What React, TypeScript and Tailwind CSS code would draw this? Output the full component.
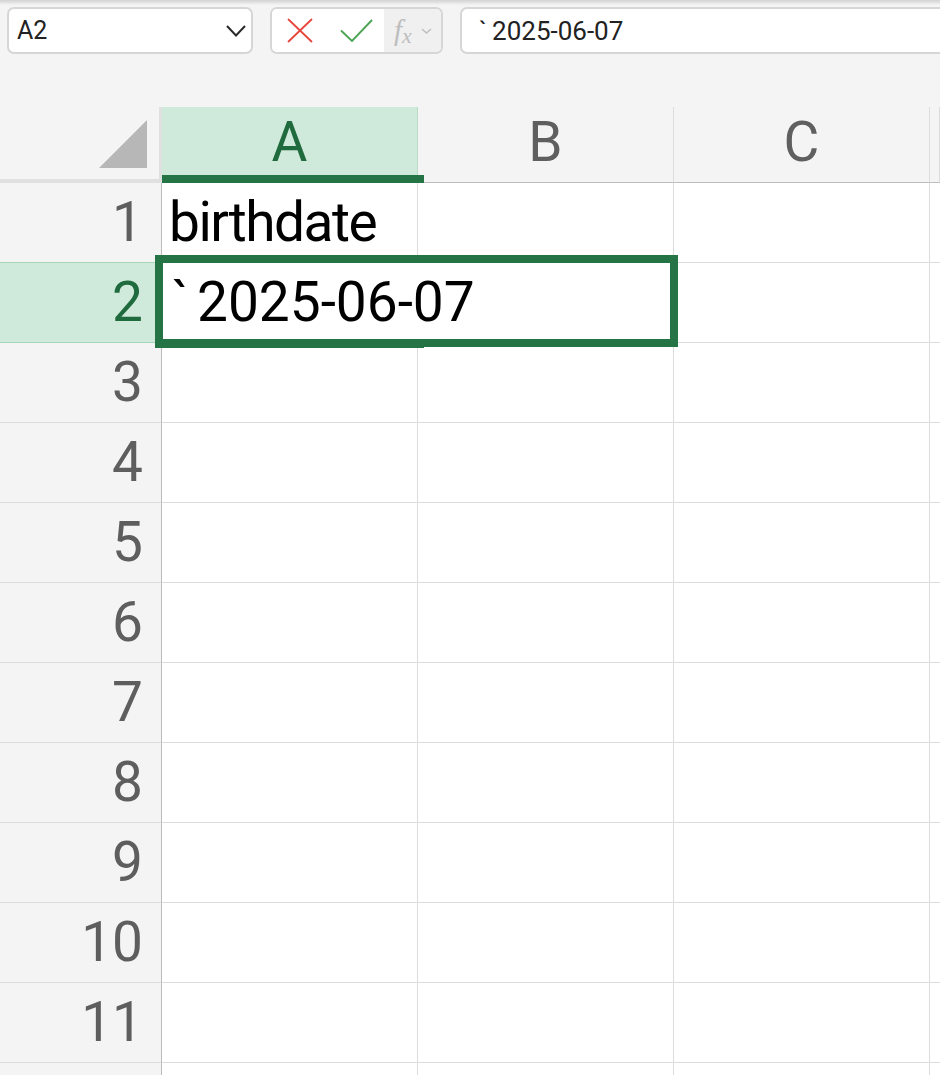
import React from "react";

const rowNumbers = [1, 2, 3, 4, 5, 6, 7, 8, 9, 10, 11, 12];

const cellData: Record<number, string> = {
  1: "birthdate",
};

export default function App() {
  return (
    <div className="relative w-[940px] h-[1075px] overflow-hidden bg-[#f4f4f4] font-['Roboto',sans-serif]">
      {/* top shadow */}
      <div className="h-[5px] bg-gradient-to-b from-[#d2d2d2] to-[#f4f4f4]" />

      {/* Formula toolbar */}
      <div className="flex items-center h-[47px] mt-[2px] pl-[7px]">
        <div className="flex items-center justify-between w-[246px] h-full bg-white border-2 border-[#d6d6d6] rounded-[7px] pl-[8px] pr-[5px]">
          <span className="text-[25px] leading-none text-[#222]">A2</span>
          <svg width="20" height="12" viewBox="0 0 20 12">
            <polyline points="1,1 10,10.5 19,1" fill="none" stroke="#2b2b2b" strokeWidth="2" />
          </svg>
        </div>

        <div className="ml-[17px] flex h-full w-[173px] border-2 border-[#d6d6d6] rounded-[7px] overflow-hidden bg-white">
          <div className="flex items-center w-[112px] bg-white">
            <svg className="ml-[15px]" width="26" height="25" viewBox="0 0 26 25">
              <line x1="1" y1="1" x2="25" y2="24" stroke="#e6463b" strokeWidth="1.8" />
              <line x1="25" y1="1" x2="1" y2="24" stroke="#e6463b" strokeWidth="1.8" />
            </svg>
            <svg className="ml-[27px]" width="33" height="23" viewBox="0 0 33 23">
              <polyline points="1,11.5 12,22 32,1" fill="none" stroke="#4ea556" strokeWidth="1.9" />
            </svg>
          </div>
          <div className="flex flex-1 items-center bg-[#f0f0f0] pl-[10px]">
            <span className="font-['Liberation_Serif',serif] italic text-[29px] leading-none text-[#bdbdbd]">
              f<span className="text-[22px] relative top-[3px]">x</span>
            </span>
            <svg className="ml-[9px]" width="11" height="6" viewBox="0 0 11 6">
              <polyline points="1,1 5.5,5 10,1" fill="none" stroke="#bdbdbd" strokeWidth="1.4" />
            </svg>
          </div>
        </div>

        <div className="ml-[17px] -mr-[12px] flex flex-1 items-center h-full bg-white border-2 border-[#d6d6d6] rounded-[7px] pl-[17px]">
          <span className="text-[26px] leading-none text-[#222]">`</span>
          <span className="ml-[5px] text-[26px] leading-none text-[#222]">2025-06-07</span>
        </div>
      </div>

      {/* Column headers */}
      <div className="mt-[53px] grid grid-cols-[162px_256px_256px_256px_1fr] h-[76px]">
        <div className="flex items-end justify-end border-r-[3px] border-b-[4px] border-[#e0e0e0] pr-[12px] pb-[11px]">
          <svg width="48" height="48" viewBox="0 0 48 48">
            <polygon points="0,48 48,0 48,48" fill="#b7b7b7" />
          </svg>
        </div>
        <div className="relative flex items-center justify-center pb-[6px] bg-[#cfe9db] border-r border-[#b9dcc6]">
          <span className="text-[55px] leading-none text-[#1f6b3d]">A</span>
          <div className="absolute left-0 -right-[7px] bottom-0 h-[8px] bg-[#247445]" />
        </div>
        {["B", "C", ""].map((col) => (
          <div
            key={col}
            className="flex items-center justify-center pb-[5px] border-r border-r-[#dcdcdc] border-b border-b-[#bdbdbd]"
          >
            <span className="text-[55px] leading-none text-[#5f5f5f]">{col}</span>
          </div>
        ))}
      </div>

      {/* Rows */}
      {rowNumbers.map((n) => (
        <div key={n} className="grid grid-cols-[162px_256px_256px_256px_1fr] h-[80px]">
          <div
            className={
              n === 2
                ? "flex items-center justify-end pr-[18px] bg-[#cfe9db] border-r border-r-[#bababa] border-b border-b-[#a6d6b9]"
                : n === 1
                ? "flex items-center justify-end pr-[18px] bg-[#f4f4f4] border-r border-r-[#bababa] border-b border-b-[#a6d6b9]"
                : "flex items-center justify-end pr-[18px] bg-[#f4f4f4] border-r border-r-[#bababa] border-b border-b-[#dcdcdc]"
            }
          >
            {n < 12 && (
              <span className={n === 2 ? "text-[55px] leading-none text-[#1f6b3d]" : "text-[55px] leading-none text-[#5e5e5e]"}>
                {n}
              </span>
            )}
          </div>
          <div
            className={
              n === 2
                ? "flex items-center pl-[7px] bg-white border-r border-r-white border-b border-b-[#dcdcdc] whitespace-nowrap overflow-visible"
                : "flex items-center pl-[7px] bg-white border-r border-b border-[#dcdcdc] whitespace-nowrap overflow-visible"
            }
          >
            {n === 1 && <span className="text-[55px] leading-none text-black tracking-[-1.5px]">{cellData[1]}</span>}
            {n === 2 && (
              <div className="relative z-[1] flex items-center">
                <span className="ml-[3px] text-[55px] leading-none text-black">`</span>
                <span className="ml-[8px] text-[55px] leading-none text-black">2025-06-07</span>
              </div>
            )}
          </div>
          <div className="bg-white border-r border-b border-[#dcdcdc]" />
          <div className="bg-white border-r border-b border-[#dcdcdc]" />
          <div className="bg-white border-b border-[#dcdcdc]" />
        </div>
      ))}

      {/* Active cell selection */}
      <div className="absolute left-[155px] top-[255px] w-[523px] h-[92px] border-[8px] border-[#247445]" />
      <div className="absolute left-[155px] top-[346px] w-[269px] h-[2px] bg-[#247445]" />
    </div>
  );
}
